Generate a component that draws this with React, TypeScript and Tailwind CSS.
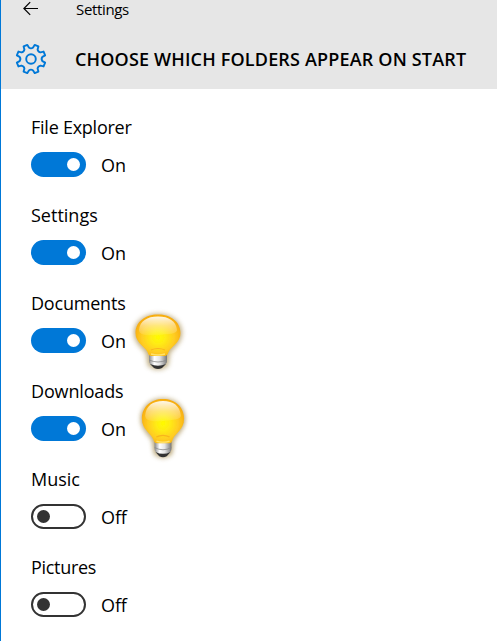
import React from "react";

interface Folder {
    name: string;
    on: boolean;
    nameClass: string;
    bulb?: "wide" | "tall";
}

const folders: Folder[] = [
    { name: "File Explorer", on: true, nameClass: "tracking-[-0.25px]" },
    { name: "Settings", on: true, nameClass: "tracking-[0px]" },
    { name: "Documents", on: true, nameClass: "tracking-[-0.2px]", bulb: "wide" },
    { name: "Downloads", on: true, nameClass: "tracking-[-0.15px]", bulb: "tall" },
    { name: "Music", on: false, nameClass: "tracking-[0px]" },
    { name: "Pictures", on: false, nameClass: "tracking-[-0.3px]" },
];

const TEETH = 8;

// Outline of the cog, with a rounded valley between every two teeth
const gearPath = (() => {
    const point = (radius: number, degrees: number) => {
        const a = (degrees * Math.PI) / 180;
        return `${(16 + radius * Math.sin(a)).toFixed(2)} ${(16 - radius * Math.cos(a)).toFixed(2)}`;
    };
    const step = 360 / TEETH;
    let d = `M${point(11.6, step / 2 - 12)}`;
    for (let i = 0; i < TEETH; i++) {
        const c = step * (i + 0.5);
        d += `L${point(14.6, c - 8)}L${point(14.6, c + 8)}L${point(11.6, c + 12)}`;
        d += `Q${point(9.8, c + step / 2)} ${point(11.6, c + step - 12)}`;
    }
    return `${d}Z`;
})();

const Gear = () => (
    <svg viewBox="0 0 32 32" className="h-8 w-8 shrink-0" fill="none" stroke="#0078d7" strokeWidth="1.9">
        <path d={gearPath} strokeLinejoin="round" />
        <circle cx="16" cy="16" r="4.800" />
    </svg>
);

const Bulb = ({ shape }: { shape: "wide" | "tall" }) => (
    <svg
        viewBox="0 0 64 72"
        preserveAspectRatio="none"
        className={shape === "wide" ? "absolute -top-[20px] left-[95px] h-[72px] w-[64px]" : "absolute -top-[24px] left-[102px] h-[77px] w-[60px]"}
    >
        <defs>
            <radialGradient id={`glass-${shape}`} cx="0.5" cy="0.55" r="0.58">
                <stop offset="0" stopColor="#fffb00" />
                <stop offset="0.28" stopColor="#ffec14" />
                <stop offset="0.62" stopColor="#ffcd22" />
                <stop offset="1" stopColor="#f6a60c" />
            </radialGradient>
            <linearGradient id={`shine-${shape}`} x1="0" y1="0" x2="0" y2="1">
                <stop offset="0" stopColor="#fff" stopOpacity="0.9" />
                <stop offset="0.5" stopColor="#fff" stopOpacity="0.4" />
                <stop offset="1" stopColor="#fff" stopOpacity="0.08" />
            </linearGradient>
            <linearGradient id={`base-${shape}`}>
                <stop offset="0" stopColor="#888" />
                <stop offset="0.3" stopColor="#fff" />
                <stop offset="0.6" stopColor="#e4e4e4" />
                <stop offset="1" stopColor="#777" />
            </linearGradient>
            <filter id={`glow-${shape}`} x="-20%" y="-20%" width="140%" height="140%">
                <feGaussianBlur stdDeviation="2.5" />
            </filter>
            <filter id={`soft-${shape}`}>
                <feGaussianBlur stdDeviation="0.5" />
            </filter>
        </defs>
        <path d="M32 6C18 6 8 14 8 25c0 9 7 14 12 20l2 13q10 7 20 0l2-13c5-6 12-11 12-20C56 14 46 6 32 6Z" fill="#a48a4c" opacity="0.7" filter={`url(#glow-${shape})`} />
        <g filter={`url(#soft-${shape})`}>
            <path d="M23 45h18v8q0 3-4 5l-2 2h-6l-2-2q-4-2-4-5Z" fill={`url(#base-${shape})`} />
            <path d="M23 52q9 4 18 0" fill="none" stroke="#888" strokeWidth="0.8" />
            <path d="M24 56q8 3.500 16 0l-4 4q-4 2-8 0Z" fill="#333" />
            <path d="M32 6.500C19 6.500 9.500 14 9.500 25c0 10 9 13 12 19q1 4 4 4h13q3 0 4-4c3-6 12-9 12-19C54.500 14 45 6.500 32 6.500Z" fill={`url(#glass-${shape})`} />
            <path d="M32 8.500C21 8.500 14 13 13 22c0 5 8 6 19 5s19-1 19-5C50 13 43 8.500 32 8.500Z" fill={`url(#shine-${shape})`} />
            <path d="M25 42q7-3 14 0" fill="none" stroke="#f9b51c" strokeWidth="1.2" />
            <path d="M25 46q7 2 14 0" fill="none" stroke="#ffe36a" strokeWidth="1.5" />
        </g>
    </svg>
);

const Toggle = ({ on }: { on: boolean }) => (
    <div
        className={`flex h-[25px] w-[55px] shrink-0 items-center rounded-full ${
            on ? "justify-end bg-[#0078d7] pr-1.5" : "border-2 border-[#333] pl-1"
        }`}
    >
        <span className={`h-[13px] w-[13px] rounded-full ${on ? "bg-white" : "bg-[#333]"}`} />
    </div>
);

const FolderRow = ({ folder }: { folder: Folder }) => (
    <li className="h-[88px]">
        <div className={`h-6 leading-6 ${folder.nameClass}`}>{folder.name}</div>
        <div className="relative mt-[13px] flex h-[25px] items-center">
            <Toggle on={folder.on} />
            <span className="ml-[15px] mt-0.5 tracking-[-0.1px]">{folder.on ? "On" : "Off"}</span>
            {folder.bulb && <Bulb shape={folder.bulb} />}
        </div>
    </li>
);

export default function App() {
    return (
        <div className="h-[641px] w-[497px] overflow-hidden border-l border-[#0078d7] bg-white font-['Open_Sans','Noto_Sans',sans-serif] text-black">
            <header className="h-[89px] bg-[#e6e6e6]">
                <div className="flex h-5 pl-[22px]">
                    <svg viewBox="0 0 16 16" className="mt-[1px] h-4 w-4 shrink-0" fill="none" stroke="black" strokeWidth="1.2">
                        <path d="M15 7.500H1M7.200 1.200L.9 7.500l6.300 6.300" />
                    </svg>
                    <span className="ml-[37px] text-[15px] leading-[18px] tracking-[-0.35px]">Settings</span>
                </div>
                <div className="flex h-[78px] items-center pl-[14px]">
                    <Gear />
                    <h1 className="ml-7 whitespace-nowrap text-[18px] font-semibold tracking-[0.17px]">CHOOSE WHICH FOLDERS APPEAR ON START</h1>
                </div>
            </header>
            <ul className="pl-[30px] pt-[26px] text-[18px]">
                {folders.map((folder) => (
                    <FolderRow key={folder.name} folder={folder} />
                ))}
            </ul>
        </div>
    );
}
